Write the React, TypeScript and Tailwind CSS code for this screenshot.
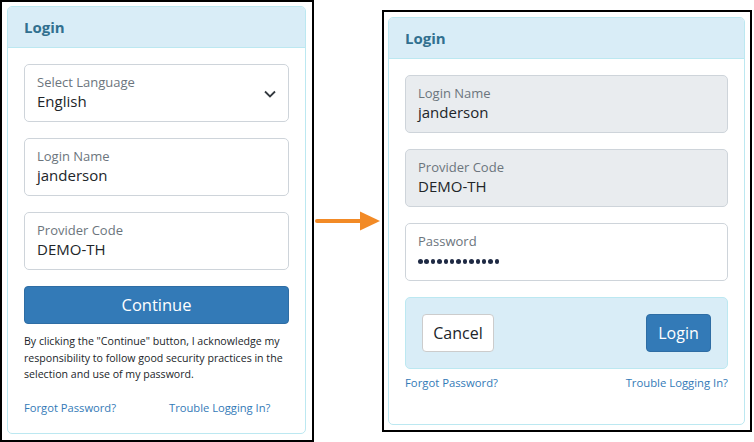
import React from "react";

const font = { fontFamily: '"Open Sans", "Noto Sans", Arial, sans-serif' };

function Field({ label, value, disabled, select, password }: { label: string; value: string; disabled?: boolean; select?: boolean; password?: boolean }) {
  return (
    <div
      className={`relative h-[58px] rounded-[5px] border border-[#ced4da] pl-[12px] pt-[8px] ${disabled ? "bg-[#e9ecef]" : "bg-white"}`}
    >
      <div className="text-[13px] leading-[18px] text-[#6c757d]">{label}</div>
      {password ? (
        <div className="mt-[9px] flex gap-[1.9px]">
          {Array.from({ length: 13 }).map((_, i) => (
            <span key={i} className="block h-[4.5px] w-[4.5px] rounded-full bg-[#1f2a44]" />
          ))}
        </div>
      ) : (
        <div className="text-[15px] leading-[20px] text-[#212529]">{value}</div>
      )}
      {select && (
        <svg className="absolute right-[12px] top-[25px]" width="12" height="8" viewBox="0 0 12 8">
          <path d="M1 1.5 L6 6.5 L11 1.5" fill="none" stroke="#343a40" strokeWidth="1.8" />
        </svg>
      )}
    </div>
  );
}

function Header() {
  return (
    <div className="flex h-[41px] items-center border-b border-[#bce8f1] bg-[#d9edf7] pl-[16px] text-[15px] font-bold text-[#31708f]">
      Login
    </div>
  );
}

export default function App() {
  return (
    <div className="flex h-[442px] w-[754px] items-start bg-white" style={font}>
      {/* Left frame */}
      <div className="h-[442px] w-[314px] shrink-0 border-2 border-black pb-[6px] pl-[5px] pr-[6px] pt-[4px]">
        <div className="flex h-full flex-col overflow-hidden rounded-[5px] border border-[#bce8f1]">
          <Header />
          <div className="flex flex-col px-[16px] pt-[16px]">
            <div className="flex flex-col gap-[16px]">
              <Field label="Select Language" value="English" select />
              <Field label="Login Name" value="janderson" />
              <Field label="Provider Code" value="DEMO-TH" />
            </div>
            <button className="mt-[16px] h-[38px] rounded-[4px] border border-[#2e6da4] bg-[#337ab7] text-[16.5px] text-white">
              Continue
            </button>
            <p className="mt-[9px] text-[10.6px] leading-[16.6px] text-[#212529]">
              By clicking the "Continue" button, I acknowledge my responsibility to follow good security practices in the selection and use of my password.
            </p>
            <div className="mt-[17px] flex text-[11.2px] leading-[16px] text-[#337ab7]">
              <span>Forgot Password?</span>
              <span className="ml-[53px]">Trouble Logging In?</span>
            </div>
          </div>
        </div>
      </div>

      {/* Arrow */}
      <div className="mt-[211px] w-[68px] shrink-0 pl-[1px]">
        <svg width="66" height="20" viewBox="0 0 66 20">
          <rect x="0" y="8" width="48" height="4" rx="2" fill="#f28a26" />
          <polygon points="45,0.5 65,10 45,19.5" fill="#f28a26" />
        </svg>
      </div>

      {/* Right frame */}
      <div className="mt-[10px] h-[422px] w-[370px] shrink-0 border-2 border-black pb-[5px] pl-[4px] pr-[5px] pt-[5px]">
        <div className="flex h-full flex-col overflow-hidden rounded-[5px] border border-[#bce8f1]">
          <Header />
          <div className="flex flex-col px-[16px] pt-[16px]">
            <div className="flex flex-col gap-[16px]">
              <Field label="Login Name" value="janderson" disabled />
              <Field label="Provider Code" value="DEMO-TH" disabled />
              <Field label="Password" value="" password />
            </div>
            <div className="mt-[16px] flex h-[72px] items-center justify-between rounded-[5px] border border-[#bce8f1] bg-[#d9edf7] px-[16px]">
              <button className="h-[38px] w-[72px] rounded-[4px] border border-[#ccc] bg-white text-[16px] text-[#212529]">
                Cancel
              </button>
              <button className="h-[38px] w-[65px] rounded-[4px] border border-[#2e6da4] bg-[#337ab7] text-[16px] text-white">
                Login
              </button>
            </div>
            <div className="mt-[6px] flex justify-between text-[11.3px] leading-[16px] text-[#337ab7]">
              <span>Forgot Password?</span>
              <span>Trouble Logging In?</span>
            </div>
          </div>
        </div>
      </div>
    </div>
  );
}
